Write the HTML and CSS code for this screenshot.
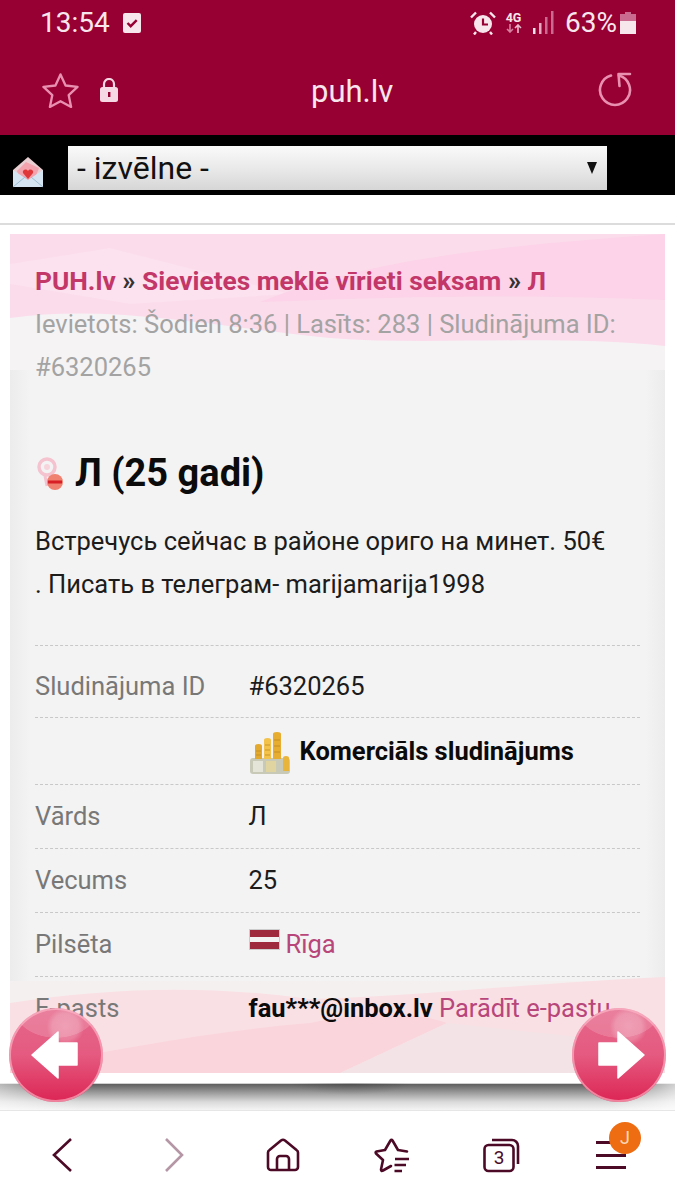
FILE: index.html
```html
<!DOCTYPE html>
<html lang="lv">
<head>
<meta charset="utf-8">
<title>puh.lv</title>
<link rel="stylesheet" href="styles.css">
</head>
<body>
<div class="app">
  <header class="chrome">
    <div class="status">
      <div class="status-left">
        <span class="clock">13:54</span>
        <svg class="ic-check" viewBox="0 0 18 20"><path d="M2 0h14a2 2 0 0 1 2 2v16a2 2 0 0 1-2 2H2a2 2 0 0 1-2-2V2a2 2 0 0 1 2-2z" fill="#f8e6ed"/><path d="M4.500 10l3.200 3.200 6-6" fill="none" stroke="#960032" stroke-width="2.400"/></svg>
      </div>
      <div class="status-right">
        <svg class="ic-alarm" viewBox="0 0 26 24"><circle cx="13" cy="13" r="9" fill="#f8e6ed"/><path d="M13 7.500V13.500h5" fill="none" stroke="#960032" stroke-width="2.200"/><path d="M1 6.500 6 1.500M25 6.500 20 1.500M6 21l-2 2.500M20 21l2 2.500" stroke="#f8e6ed" stroke-width="2.400"/></svg>
        <span class="net"><span class="net-g">4G</span><svg viewBox="0 0 16 9" class="net-a"><path d="M4 0v8M1 5l3 3 3-3" fill="none" stroke="#d77f9f" stroke-width="1.600"/><path d="M12 9V1M9 4l3-3 3 3" fill="none" stroke="#eab9cb" stroke-width="1.600"/></svg></span>
        <svg class="ic-signal" viewBox="0 0 22 23"><rect x="0" y="17" width="2.500" height="6" fill="#f8e6ed"/><rect x="6" y="12" width="2.500" height="11" fill="#e9a9c0"/><rect x="12" y="6" width="2.500" height="17" fill="#c96a8e"/><rect x="18" y="0" width="2.500" height="23" fill="#c96a8e"/></svg>
        <span class="pct">63%</span>
        <svg class="ic-batt" viewBox="0 0 16 22"><path d="M5 0h6v2h5v7H0V2h5z" fill="#c96a8e"/><rect y="9" width="16" height="13" fill="#f8e6ed"/></svg>
      </div>
    </div>
    <div class="toolbar">
      <svg class="ic-star" viewBox="0 0 38 36"><path d="M19 2l5.200 11.400 12.300 1.400-9.100 8.400 2.500 12.200L19 29.500 8.100 35.400l2.500-12.200L1.500 14.800l12.300-1.400z" fill="none" stroke="#e98fb0" stroke-width="2.400" stroke-linejoin="round"/></svg>
      <svg class="ic-lock" viewBox="0 0 18 24"><path d="M4 10V6a5 5 0 0 1 10 0v4" fill="none" stroke="#f5d8e3" stroke-width="2.200"/><rect y="9" width="18" height="15" rx="2.500" fill="#f5d8e3"/><rect x="8" y="14" width="2.400" height="5" fill="#960032"/></svg>
      <span class="host">puh.lv</span>
      <svg class="ic-reload" viewBox="0 0 36 36"><path d="M13 3.500A15 15 0 1 0 21 3.500" fill="none" stroke="#e98fb0" stroke-width="2.600" stroke-linecap="round"/><path d="M32 2H20.500L21.500 14" fill="none" stroke="#e98fb0" stroke-width="2.600" stroke-linecap="round" stroke-linejoin="round"/></svg>
    </div>
  </header>

  <nav class="menubar">
    <svg class="ic-mail" viewBox="0 0 32 32"><path d="M1 14 16 1l15 13v17H1z" fill="#e9cfd2"/><path d="M5 15l9-9 13 6-5 13H8z" fill="#f2a3ad"/><path d="M1 14l15 10 15-10v17H1z" fill="#d5e6f2"/><path d="M1 31l12-10M31 31 19 21" stroke="#9dbdd3" stroke-width="1"/><path d="M16 23l-5-6c-1-3 3-5 5-2 2-3 6-1 5 2z" fill="#e0383a"/></svg>
    <div class="select"><span>- izvēlne -</span><span class="caret"></span></div>
  </nav>

  <main class="page">
    <div class="spacer"></div>
    <article class="card">
      <svg class="wave wave-top" viewBox="0 0 655 136" preserveAspectRatio="none">
        <rect width="655" height="136" fill="#f5f3f4"/>
        <path d="M0 0H655V112C540 100 420 112 320 104 200 92 100 70 0 84Z" fill="#fbdceb"/>
        <path d="M0 30 100 14 280 60 120 70 0 50Z" fill="#fce1ee"/>
        <path d="M250 68C370 20 520 10 655 0V66C520 60 400 62 250 68Z" fill="#fcd3e8"/>
      </svg>
      <svg class="wave wave-bot" viewBox="0 0 655 112" preserveAspectRatio="none">
        <path d="M0 20H655V112H0Z" fill="#f5f0f0"/>
        <path d="M0 42C100 26 200 24 300 38 400 36 520 22 655 16V112H0Z" fill="#f9e0e4"/>
        <path d="M0 108C100 90 200 70 300 62 360 50 400 50 437 62L330 112H0Z" fill="#fad5dc"/>
        <path d="M437 62 655 85V112H330Z" fill="#f3e3e6"/>
      </svg>
      <div class="card-in">
        <p class="crumbs"><a>PUH.lv</a> <b>»</b> <a>Sievietes meklē vīrieti seksam</a> <b>»</b> <a>Л</a></p>
        <p class="meta">Ievietots: Šodien 8:36 | Lasīts: 283 | Sludinājuma ID: #6320265</p>
        <h1 class="title">
          <svg class="ic-pin" viewBox="0 0 30 34"><circle cx="12" cy="10" r="8" fill="none" stroke="#f5c3cf" stroke-width="3.500"/><circle cx="12" cy="10" r="3" fill="#f7d4dc"/><path d="M10 19l2 10" stroke="#f5c3cf" stroke-width="3"/><circle cx="20" cy="25" r="8" fill="#f0806f"/><path d="M13 25h14" stroke="#d81f26" stroke-width="3"/></svg>
          Л (25 gadi)
        </h1>
        <p class="desc">Встречусь сейчас в районе ориго на минет. 50€<br>. Писать в телеграм- marijamarija1998</p>
        <dl class="info">
          <div class="row row-id"><dt>Sludinājuma ID</dt><dd>#6320265</dd></div>
          <div class="row row-com"><dt></dt><dd class="com">
            <svg class="ic-coins" viewBox="0 0 42 44"><rect x="1" y="27" width="40" height="16" rx="3" fill="#c9c9b8"/><rect x="4" y="30" width="10" height="11" fill="#e4e4d8"/><rect x="17" y="30" width="10" height="11" fill="#e0d5a0"/><path d="M6 28V15a3.500 2 0 0 1 7 0v13z" fill="#e3a92e"/><path d="M15 28V9a3.500 2 0 0 1 7 0v19z" fill="#f2c24a"/><path d="M24 28V3a4 2 0 0 1 8 0v25z" fill="#e6ad30"/><path d="M34 40V27a3 2 0 0 1 6 0v13z" fill="#e8b53a"/><path d="M7 20h5M7 24h5M16 14h5M16 19h5M16 24h5M25 9h6M25 15h6M25 21h6" stroke="#b8841e" stroke-width=".700"/></svg>
            <strong>Komerciāls sludinājums</strong></dd></div>
          <div class="row"><dt>Vārds</dt><dd>Л</dd></div>
          <div class="row"><dt>Vecums</dt><dd>25</dd></div>
          <div class="row"><dt>Pilsēta</dt><dd class="city"><span class="flag"></span><a>Rīga</a></dd></div>
          <div class="row"><dt>E-pasts</dt><dd><strong>fau***@inbox.lv</strong> <a>Parādīt e-pastu</a></dd></div>
        </dl>
      </div>
    </article>
    <div class="arrow arrow-l"><svg viewBox="0 0 94 94"><path d="M23 47 49 24v11h19v22H49v13z" fill="#fff" stroke="#fff" stroke-width="1.500" stroke-linejoin="round"/></svg></div>
    <div class="arrow arrow-r"><svg viewBox="0 0 94 94"><path d="M72 47 46 24v11H27v22h19v13z" fill="#fff" stroke="#fff" stroke-width="1.500" stroke-linejoin="round"/></svg></div>
  </main>

  <footer class="bottom">
    <svg class="nv nv-back" viewBox="0 0 22 36"><path d="M20 2 3 18l17 16" fill="none" stroke="#4d0a26" stroke-width="2.600"/></svg>
    <svg class="nv nv-fwd" viewBox="0 0 22 36"><path d="M3 2l16 16L3 34" fill="none" stroke="#b596a4" stroke-width="2.600"/></svg>
    <svg class="nv nv-home" viewBox="0 0 34 34"><path d="M2 29V14.500Q2 13 3.500 12L15 2.500Q17 1 19 2.500L30.500 12Q32 13 32 14.500V29a3 3 0 0 1-3 3H5a3 3 0 0 1-3-3z" fill="none" stroke="#4d0a26" stroke-width="2.600" stroke-linejoin="round"/><path d="M11 32V21a3 3 0 0 1 3-3h6a3 3 0 0 1 3 3v11" fill="none" stroke="#4d0a26" stroke-width="2.600"/></svg>
    <svg class="nv nv-fav" viewBox="0 0 36 35"><path d="M33 13.500 24 12 18.500 2.500Q17.500 1 16.500 2.500L11 12 2.500 13.500Q1 14 2 15.500L9 22 7 31.500Q7 33.500 9 32.500L17 28" fill="none" stroke="#4d0a26" stroke-width="2.600" stroke-linejoin="round" stroke-linecap="round"/><path d="M21 21H35M20.500 27H32M20.500 33H28" stroke="#4d0a26" stroke-width="2.400"/></svg>
    <div class="nv nv-tabs"><svg viewBox="0 0 38 36"><rect x="1.500" y="8" width="29" height="26" rx="4" fill="none" stroke="#4d0a26" stroke-width="2.600"/><path d="M9 3h20a6 6 0 0 1 6 6v18" fill="none" stroke="#4d0a26" stroke-width="2.600"/></svg><span>3</span></div>
    <div class="nv nv-menu"><i></i><i></i><i></i><span class="badge">J</span></div>
  </footer>
</div>
</body>
</html>
```
FILE: styles.css
```css
* { box-sizing: border-box; }
html, body { margin: 0; padding: 0; background: #fff; }
body { font-family: Roboto, "Noto Sans", sans-serif; overflow: hidden; }
p, h1, dl, dd { margin: 0; }
svg { display: block; flex: none; }

.app { width: 675px; height: 1200px; display: flex; flex-direction: column; overflow: hidden; }

/* browser chrome */
.chrome { height: 135px; background: #960032; color: #f8e6ed; flex: none; display: flex; flex-direction: column; }
.status { height: 47px; display: flex; justify-content: space-between; align-items: center; padding: 0 39px 2px 40px; }
.status-left, .status-right { display: flex; align-items: center; }
.clock { font-size: 28px; font-weight: 400; width: 83px; }
.ic-check { width: 18px; height: 20px; }
.ic-alarm { width: 26px; height: 24px; margin-right: 9px; }
.net { display: flex; flex-direction: column; align-items: center; width: 17px; margin-right: 11px; }
.net-g { font-size: 12.500px; font-weight: 700; line-height: 12px; }
.net-a { width: 16px; height: 9px; }
.ic-signal { width: 22px; height: 23px; margin-right: 10px; }
.pct { font-size: 28px; font-weight: 400; margin-right: 3px; }
.ic-batt { width: 16px; height: 22px; }

.toolbar { flex: 1; display: flex; align-items: center; padding: 0 42px 2px 42px; position: relative; }
.ic-star { width: 37px; height: 36px; }
.ic-lock { width: 18px; height: 24px; margin-left: 21px; }
.host { font-size: 31px; font-weight: 400; margin: 2px 0 0 193px; }
.ic-reload { width: 36px; height: 36px; margin-left: auto; margin-right: -1px; }

.menubar { height: 60px; background: #000; flex: none; display: flex; align-items: center; padding: 0 68px 0 12px; position: relative; }
.ic-mail { width: 32px; height: 32px; margin: 13px 24px 0 0; }
.select { width: 539px; height: 44px; margin-top: 6px; background: linear-gradient(#fafafa, #e6e6e6 60%, #d6d6d6); display: flex; justify-content: space-between; align-items: center; padding: 0 10px 0 9px; font-size: 32px; font-weight: 400; color: #111; }
.caret { width: 0; height: 0; border-left: 5.500px solid transparent; border-right: 5.500px solid transparent; border-top: 12px solid #111; }

/* page */
.page { flex: 1; position: relative; overflow: hidden; display: flex; flex-direction: column; min-height: 0; }
.page::after { content: ""; position: absolute; left: 0; right: 0; top: 888px; height: 27px; background: linear-gradient(90deg, rgba(255,255,255,.55), transparent 12%, transparent 90%, rgba(255,255,255,.7)), radial-gradient(ellipse 60px 12px at 52% 0, rgba(0,0,0,.18), transparent), linear-gradient(#d0d0d0 0 1px, #5e5e5e 1px, #9a9a9a 35%, #dadada 70%, #f4f4f4); }
.spacer { height: 30px; border-bottom: 2px solid #dcdcdc; margin-bottom: 9px; flex: none; }
.card { margin: 0 10px; height: 839px; flex: none; background: linear-gradient(90deg, #ececec, #f3f3f3 3%, #f3f3f3 97%, #ececec); position: relative; overflow: hidden; }
.wave { position: absolute; left: 0; width: 100%; }
.wave-top { top: 0; height: 136px; }
.wave-bot { bottom: 0; height: 112px; }
.card-in { position: relative; padding: 26px 25px 0; font-size: 25.500px; line-height: 43px; }
.crumbs { color: #222; font-weight: 700; font-size: 26.300px; }
.crumbs a { color: #c23768; }
.crumbs b { font-weight: 700; color: #333; }
.meta { color: #a3a3a3; }
.title { display: flex; align-items: center; gap: 10px; font-size: 38px; line-height: 43px; font-weight: 700; color: #0b0b0b; margin-top: 63px; }
.ic-pin { width: 30px; height: 34px; }
.desc { color: #1c1c1c; margin-top: 25px; }
.info { margin-top: 39px; }
.row { display: flex; align-items: center; height: 64px; border-top: 1px dashed #c8c8c8; }
.row-id { height: 72px; padding-top: 9px; }
.row-com { height: 67px; padding-top: 0; }
.row dt { width: 213.500px; flex: none; color: #787878; }
.row dd { color: #1c1c1c; white-space: nowrap; }
.row a { color: #b8467a; }
.row strong { color: #0b0b0b; font-weight: 700; }
.com { display: flex; align-items: center; gap: 9px; }
.ic-coins { width: 42px; height: 44px; margin-top: 3px; }
.city { display: flex; align-items: center; gap: 6px; }
.flag { width: 31px; height: 21px; margin-top: -10px; background: linear-gradient(#9e2b3d 0 40%, #f2f2f2 40% 60%, #9e2b3d 60%); box-shadow: 0 0 0 1px #ccc inset; }

.arrow { position: absolute; top: 813px; width: 94px; height: 94px; border-radius: 50%; background: radial-gradient(circle at 60% 20%, rgba(255,255,255,.28) 0, rgba(255,255,255,.2) 14%, transparent 20%), radial-gradient(ellipse 42px 30px at 50% 0, rgba(255,255,255,.16) 0 98%, transparent), linear-gradient(#e5678a, #e55a80 50%, #dc2554); box-shadow: inset 0 0 0 2px rgba(255,190,205,.6); z-index: 2; }
.arrow-l { left: 9px; }
.arrow-r { right: 9px; }
.arrow svg { width: 94px; height: 94px; }

/* bottom bar */
.bottom { height: 90px; flex: none; background: #fff; border-top: 1px solid #e6e6e6; position: relative; display: grid; grid-template-columns: 112px 112px 106px 112px 108px 110px; align-items: center; justify-items: center; padding: 0 0 1px 6px; }
.nv-back, .nv-fwd { width: 22px; height: 36px; }
.nv-home { width: 34px; height: 34px; }
.nv-fav { width: 36px; height: 35px; }
.nv-tabs { width: 38px; height: 36px; position: relative; }
.nv-tabs svg { width: 38px; height: 36px; }
.nv-tabs span { position: absolute; left: 1px; width: 30px; top: 8px; text-align: center; font-size: 19px; line-height: 26px; color: #4d0a26; }
.nv-menu { width: 30px; height: 28px; position: relative; display: flex; flex-direction: column; justify-content: space-between; }
.nv-menu i { display: block; height: 3px; background: #4d0a26; }
.badge { position: absolute; left: 13px; top: -19px; width: 32px; height: 32px; border-radius: 50%; background: #ee6c12; color: #fbd9b8; font-size: 18px; line-height: 32px; text-align: center; }
```
